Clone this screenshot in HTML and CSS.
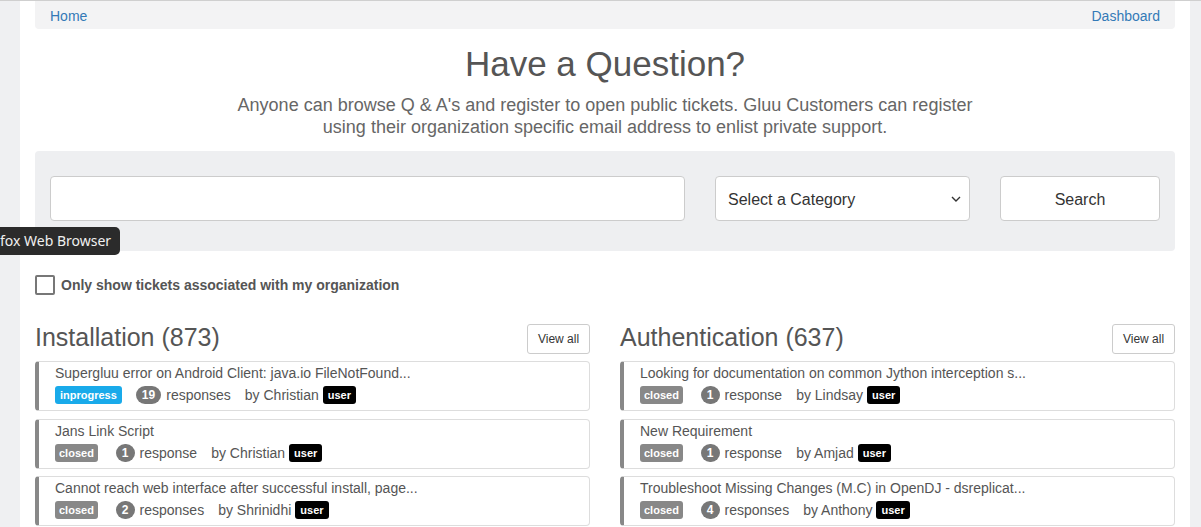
FILE: index.html
```html
<!DOCTYPE html>
<html>
<head>
<meta charset="utf-8">
<link rel="stylesheet" href="styles.css">
</head>
<body>
<div class="page">
  <nav class="crumbs">
    <a href="#">Home</a>
    <a href="#">Dashboard</a>
  </nav>
  <header class="hero">
    <h1>Have a Question?</h1>
    <p>Anyone can browse Q &amp; A's and register to open public tickets. Gluu Customers can register<br>using their organization specific email address to enlist private support.</p>
  </header>
  <form class="search">
    <input class="search-input" type="text">
    <div class="select">Select a Category
      <svg class="chev" width="10" height="6" viewBox="0 0 10 6"><path d="M1 1l4 4 4-4" fill="none" stroke="#333" stroke-width="1.4"/></svg>
    </div>
    <button class="search-btn" type="button">Search</button>
  </form>
  <label class="org">
    <span class="box"></span>
    <span>Only show tickets associated with my organization</span>
  </label>
  <div class="cols">
    <section class="col">
      <div class="col-head">
        <h2>Installation (873)</h2>
        <button class="view" type="button">View all</button>
      </div>
      <div class="card">
        <div class="title">Supergluu error on Android Client: java.io FileNotFound...</div>
        <div class="meta"><span class="label blue">inprogress</span><span class="count">19</span><span class="resp">responses</span><span>by Christian</span><span class="label black">user</span></div>
      </div>
      <div class="card">
        <div class="title">Jans Link Script</div>
        <div class="meta"><span class="label grey">closed</span><span class="count">1</span><span class="resp">response</span><span>by Christian</span><span class="label black">user</span></div>
      </div>
      <div class="card">
        <div class="title">Cannot reach web interface after successful install, page...</div>
        <div class="meta"><span class="label grey">closed</span><span class="count">2</span><span class="resp">responses</span><span>by Shrinidhi</span><span class="label black">user</span></div>
      </div>
    </section>
    <section class="col">
      <div class="col-head">
        <h2>Authentication (637)</h2>
        <button class="view" type="button">View all</button>
      </div>
      <div class="card">
        <div class="title">Looking for documentation on common Jython interception s...</div>
        <div class="meta"><span class="label grey">closed</span><span class="count">1</span><span class="resp">response</span><span>by Lindsay</span><span class="label black">user</span></div>
      </div>
      <div class="card">
        <div class="title">New Requirement</div>
        <div class="meta"><span class="label grey">closed</span><span class="count">1</span><span class="resp">response</span><span>by Amjad</span><span class="label black">user</span></div>
      </div>
      <div class="card">
        <div class="title">Troubleshoot Missing Changes (M.C) in OpenDJ - dsreplicat...</div>
        <div class="meta"><span class="label grey">closed</span><span class="count">4</span><span class="resp">responses</span><span>by Anthony</span><span class="label black">user</span></div>
      </div>
    </section>
  </div>
</div>
<div class="tooltip">fox Web Browser</div>
</body>
</html>
```
FILE: styles.css
```css
html, body {
  margin: 0;
  padding: 0;
  height: 100%;
  overflow: hidden;
}
body {
  background: #eff0f2;
  border-top: 1px solid #cfcfcf;
  font-family: "Liberation Sans", Arial, sans-serif;
  color: #555;
  font-size: 14px;
}
.page {
  width: 1140px;
  margin-left: 20px;
  padding: 0 15px;
  background: #fff;
  min-height: 100%;
}
.crumbs {
  display: flex;
  justify-content: space-between;
  background: #f3f3f4;
  border-radius: 0 0 4px 4px;
  height: 28px;
  padding: 1px 15px 0;
  box-sizing: border-box;
  align-items: center;
}
.crumbs a {
  color: #337ab7;
  text-decoration: none;
  font-size: 14px;
}
.hero {
  text-align: center;
}
.hero h1 {
  margin: 15px 0 0;
  font-size: 35px;
  font-weight: normal;
  line-height: 40px;
  color: #555;
}
.hero p {
  margin: 10px 0 0;
  font-size: 18px;
  line-height: 22px;
  color: #666;
}
.search {
  margin-top: 13px;
  background: #eeeff1;
  border-radius: 4px;
  padding: 25px 15px 30px;
  display: grid;
  grid-template-columns: 635px 255px 160px;
  column-gap: 30px;
}
.search-input, .select, .search-btn {
  box-sizing: border-box;
  height: 45px;
  border: 1px solid #ccc;
  border-radius: 4px;
  background: #fff;
  font-family: "Liberation Sans", Arial, sans-serif;
  font-size: 16px;
  color: #333;
  margin: 0;
}
.select {
  display: flex;
  align-items: center;
  justify-content: space-between;
  padding: 3px 8px 0 12px;
}
.chev { display: block; margin-top: -3px; }
.search-btn {
  padding: 2px 0 0;
}
.org {
  display: flex;
  align-items: center;
  gap: 6px;
  margin-top: 24px;
  font-weight: bold;
  font-size: 14px;
  color: #555;
}
.box {
  width: 16px;
  height: 16px;
  border: 2px solid #777;
  border-radius: 2px;
}
.cols {
  display: grid;
  grid-template-columns: 555px 555px;
  column-gap: 30px;
  margin-top: 29px;
}
.col-head {
  display: flex;
  justify-content: space-between;
  align-items: flex-start;
  height: 30px;
  margin-bottom: 7px;
}
.col-head h2 {
  margin: 0;
  font-size: 25px;
  line-height: 27px;
  font-weight: normal;
  color: #555;
}
.view {
  height: 30px;
  width: 63px;
  padding: 0;
  background: #fff;
  border: 1px solid #ccc;
  border-radius: 3px;
  font-family: "Liberation Sans", Arial, sans-serif;
  font-size: 12px;
  color: #333;
}
.card {
  box-sizing: border-box;
  height: 50px;
  border: 1px solid #ddd;
  border-left: 4px solid #888;
  border-radius: 4px;
  padding: 2px 10px 0 16px;
  margin-bottom: 7.5px;
}
.title {
  line-height: 18px;
  color: #555;
}
.meta {
  display: flex;
  align-items: center;
  margin-top: 4px;
  height: 18px;
}
.label {
  display: inline-block;
  height: 18px;
  line-height: 18px;
  padding: 0 5px;
  font-size: 11px;
  font-weight: bold;
  color: #fff;
  border-radius: 3px;
}
.label.blue { background: #19aaea; margin-right: 14px; }
.label.grey { background: #888; margin-right: 18px; padding: 0 4px; }
.label.black { background: #000; margin-left: 4px; }
.count {
  min-width: 18px;
  box-sizing: border-box;
  height: 18px;
  padding: 0 6px;
  border-radius: 9px;
  background: #777;
  color: #fff;
  font-weight: bold;
  font-size: 12px;
  line-height: 18px;
  text-align: center;
}
.resp {
  margin-left: 5px;
  margin-right: 14px;
}
.tooltip {
  position: absolute;
  left: -12px;
  top: 227px;
  height: 28px;
  line-height: 28px;
  padding: 0 9px 0 12px;
  background: #2b2b2b;
  color: #f0f0f0;
  border-radius: 5px;
  font-family: "Noto Sans", sans-serif;
  font-size: 14px;
}
```
